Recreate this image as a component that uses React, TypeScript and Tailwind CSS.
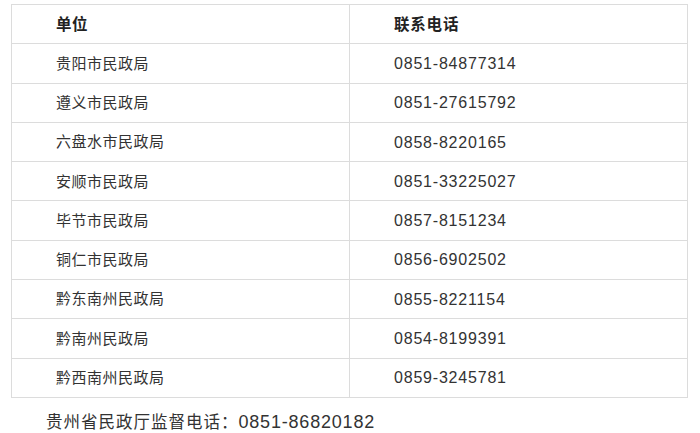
const rows = [
  { unit: '贵阳市民政局', phone: '0851-84877314' },
  { unit: '遵义市民政局', phone: '0851-27615792' },
  { unit: '六盘水市民政局', phone: '0858-8220165' },
  { unit: '安顺市民政局', phone: '0851-33225027' },
  { unit: '毕节市民政局', phone: '0857-8151234' },
  { unit: '铜仁市民政局', phone: '0856-6902502' },
  { unit: '黔东南州民政局', phone: '0855-8221154' },
  { unit: '黔南州民政局', phone: '0854-8199391' },
  { unit: '黔西南州民政局', phone: '0859-3245781' },
];

const font = "font-['Liberation_Sans','Noto_Sans_CJK_SC',sans-serif]";

export default function App() {
  return (
    <div className={`w-[700px] h-[433px] bg-white text-[#333] ${font}`}>
      <div className="pt-[4px] pl-[11px]">
        <table className="w-[677px] border-collapse table-fixed">
          <thead>
            <tr className="h-[39.3px]">
              <th className="w-[338px] border border-[#dcdcdc] pl-[44px] pt-[1px] text-left text-[15.5px] font-bold tracking-[0.5px] text-[#222]">
                单位
              </th>
              <th className="border border-[#dcdcdc] pl-[44px] pt-[1px] text-left text-[15.5px] font-bold tracking-[0.8px] text-[#222]">
                联系电话
              </th>
            </tr>
          </thead>
          <tbody>
            {rows.map(r => (
              <tr key={r.unit} className="h-[39.3px]">
                <td className="border border-[#dcdcdc] pl-[44px] pt-[1px] text-[15px] tracking-[0.5px]">{r.unit}</td>
                <td className="border border-[#dcdcdc] pl-[44px] pt-[1px] text-[16px] tracking-[0.8px]">{r.phone}</td>
              </tr>
            ))}
          </tbody>
        </table>
      </div>
      <p className="mt-[12px] pl-[46px] text-[16.5px] tracking-[1px] leading-[24px]">
        贵州省民政厅监督电话：<span className="text-[18px] tracking-[0.8px]">0851-86820182</span>
      </p>
    </div>
  );
}
